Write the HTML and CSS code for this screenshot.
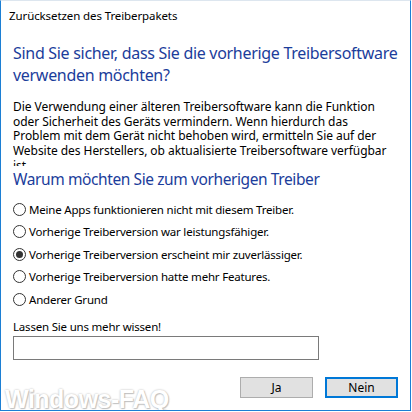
FILE: index.html
```html
<!DOCTYPE html>
<html lang="de">
<head>
    <meta charset="UTF-8">
    <title>Zurücksetzen des Treiberpakets</title>
    <link rel="stylesheet" href="styles.css">
</head>
<body>
    <div class="window">
        <div class="title">Zurücksetzen des Treiberpakets</div>
        <div class="content">
            <h1>Sind Sie sicher, dass Sie die vorherige Treibersoftware<br>verwenden möchten?</h1>
            <div class="desc">
                Die Verwendung einer älteren Treibersoftware kann die Funktion<br>
                oder Sicherheit des Geräts vermindern. Wenn hierdurch das<br>
                Problem mit dem Gerät nicht behoben wird, ermitteln Sie auf der<br>
                Website des Herstellers, ob aktualisierte Treibersoftware verfügbar<br>
                ist.
            </div>
            <h2>Warum möchten Sie zum vorherigen Treiber</h2>
            <div class="options">
                <label class="option"><input type="radio" name="reason"> Meine Apps funktionieren nicht mit diesem Treiber.</label>
                <label class="option"><input type="radio" name="reason"> Vorherige Treiberversion war leistungsfähiger.</label>
                <label class="option"><input type="radio" name="reason" checked> Vorherige Treiberversion erscheint mir zuverlässiger.</label>
                <label class="option"><input type="radio" name="reason"> Vorherige Treiberversion hatte mehr Features.</label>
                <label class="option"><input type="radio" name="reason"> Anderer Grund</label>
            </div>
            <label class="more" for="more">Lassen Sie uns mehr wissen!</label>
            <input type="text" id="more" class="more-input">
            <div class="buttons">
                <button class="btn">Ja</button>
                <button class="btn btn-default">Nein</button>
            </div>
        </div>
        <div class="watermark">Windows-FAQ</div>
    </div>
</body>
</html>
```

FILE: styles.css
```css
* {
    margin: 0;
    padding: 0;
    box-sizing: border-box;
}

body {
    background-color: white;
    width: 412px;
    height: 412px;
    font-family: "Segoe UI", "Noto Sans", sans-serif;
    font-size: 11.5px;
    letter-spacing: -0.2px;
    color: #000;
}

.window {
    position: relative;
    width: 411px;
    height: 411px;
    border: 1px solid #1c7fd4;
    border-top-color: #dde6ef;
    background-color: white;
    overflow: hidden;
}

.title {
    height: 30px;
    line-height: 30px;
    padding-left: 8px;
    letter-spacing: -0.1px;
}

.content {
    padding: 11px 12px 0 12px;
}

h1 {
    font-size: 16px;
    letter-spacing: -0.3px;
    font-weight: normal;
    color: #1b3d9b;
    line-height: 22px;
    white-space: nowrap;
}

.desc {
    margin-top: 14px;
    height: 66px;
    font-size: 12px;
    letter-spacing: -0.05px;
    line-height: 14.7px;
    overflow: hidden;
}

h2 {
    margin-top: 2px;
    font-size: 15.5px;
    letter-spacing: -0.4px;
    font-weight: normal;
    color: #1b3d9b;
    line-height: 22px;
}

.options {
    margin-top: 8px;
    display: flex;
    flex-direction: column;
}

.option {
    display: flex;
    align-items: center;
    height: 22.5px;
    gap: 3px;
}

.option input {
    appearance: none;
    width: 13px;
    height: 13px;
    border: 1px solid #333;
    border-radius: 50%;
    background: white;
    display: flex;
    align-items: center;
    justify-content: center;
}

.option input:checked::after {
    content: "";
    width: 7px;
    height: 7px;
    border-radius: 50%;
    background: #333;
}

.more {
    display: block;
    margin-top: 8px;
    line-height: 16px;
}

.more-input {
    display: block;
    margin-top: 1px;
    width: 306px;
    height: 24px;
    border: 1px solid #7a7a7a;
    outline: none;
}

.buttons {
    display: flex;
    justify-content: flex-end;
    gap: 12px;
    margin-top: 17px;
}

.btn {
    width: 73px;
    height: 21px;
    font-family: inherit;
    font-size: 12px;
    background: #e1e1e1;
    border: 1px solid #adadad;
}

.btn-default {
    border: 2px solid #0078d7;
}

.watermark {
    position: absolute;
    left: 4px;
    bottom: -4px;
    font-family: "Liberation Sans", sans-serif;
    font-size: 25px;
    font-weight: bold;
    color: white;
    text-shadow: 0 0 2px #b0b0b0, 1px 1px 1px #c8c8c8;
    letter-spacing: -0.5px;
}
```
